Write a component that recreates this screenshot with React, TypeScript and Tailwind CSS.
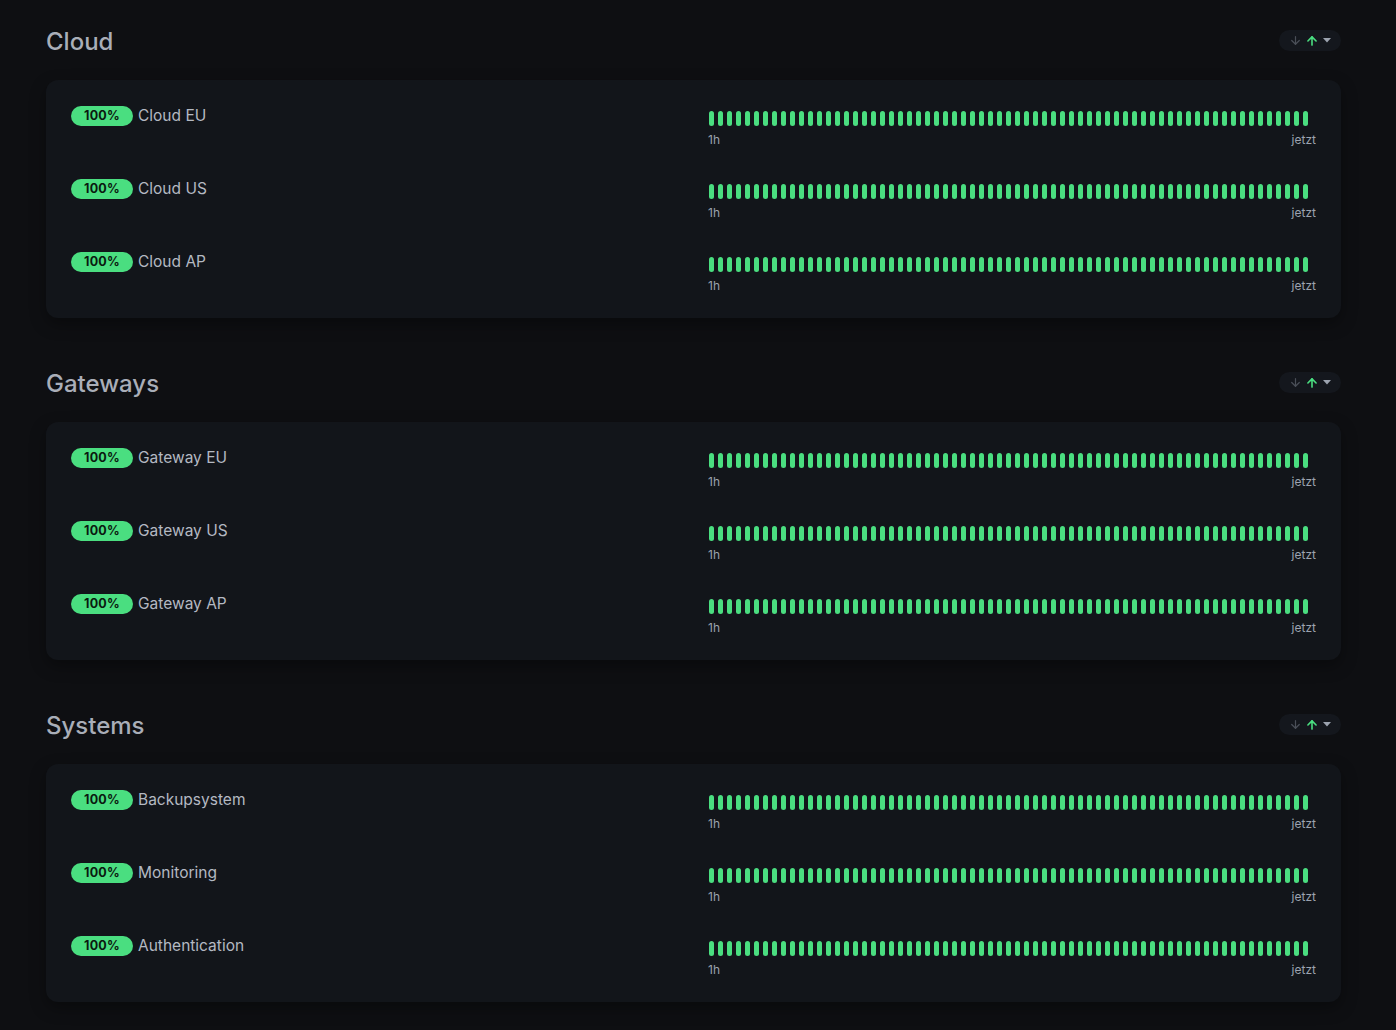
import React from 'react';
import { ArrowDown, ArrowUp } from 'lucide-react';

type Service = { name: string; uptime: string };
type Group = { title: string; services: Service[] };

const groups: Group[] = [
  {
    title: 'Cloud',
    services: [
      { name: 'Cloud EU', uptime: '100%' },
      { name: 'Cloud US', uptime: '100%' },
      { name: 'Cloud AP', uptime: '100%' },
    ],
  },
  {
    title: 'Gateways',
    services: [
      { name: 'Gateway EU', uptime: '100%' },
      { name: 'Gateway US', uptime: '100%' },
      { name: 'Gateway AP', uptime: '100%' },
    ],
  },
  {
    title: 'Systems',
    services: [
      { name: 'Backupsystem', uptime: '100%' },
      { name: 'Monitoring', uptime: '100%' },
      { name: 'Authentication', uptime: '100%' },
    ],
  },
];

const BARS = Array.from({ length: 67 }, (_, i) => i);

const SortControl: React.FC = () => (
  <div className="flex items-center h-[21px] mb-[3px] rounded-full bg-[#14171d] pl-[10px] pr-[10px]">
    <ArrowDown size={13} strokeWidth={2.25} className="text-[#4a4f58]" />
    <ArrowUp size={14} strokeWidth={2.75} className="text-[#4ade80] ml-[3px]" />
    <svg width="8" height="5" viewBox="0 0 8 5" className="ml-[4px]">
      <path d="M0 0h8L4 4.5z" fill="#9ca3af" />
    </svg>
  </div>
);

const ServiceRow: React.FC<{ service: Service }> = ({ service }) => (
  <div className="flex items-start h-[43px]">
    <div className="flex-1 flex items-center h-6 gap-[5px]">
      <span className="inline-flex items-center justify-center w-[62px] h-5 rounded-full bg-[#4ade80] text-[#0b1a10] text-[12.5px] font-bold tracking-[0.02em]">
        {service.uptime}
      </span>
      <span className="text-[15.5px] text-[#b4b9c2]">{service.name}</span>
    </div>
    <div className="w-[608px] pt-[7px]">
      <div className="flex gap-1 pl-px">
        {BARS.map((i) => (
          <div key={i} className="w-[5px] h-[15px] rounded-full bg-[#4ade80]" />
        ))}
      </div>
      <div className="flex justify-between mt-[6px] text-xs leading-4 text-[#9ca3af]">
        <span>1h</span>
        <span>jetzt</span>
      </div>
    </div>
  </div>
);

export default function App() {
  return (
    <div className="min-h-screen bg-[#0e0f12] pl-[46px] pr-[55px] pt-[26px] pb-10 font-['Inter',sans-serif]">
      <div className="flex flex-col gap-[50px]">
        {groups.map((g) => (
          <section key={g.title}>
            <div className="flex items-center justify-between h-8 mb-[22px]">
              <h2 className="text-2xl font-medium leading-8 text-[#a9aeb8]">{g.title}</h2>
              <SortControl />
            </div>
            <div className="rounded-xl bg-[#12151a] pl-[25px] pr-[25px] pt-6 pb-[25px] flex flex-col gap-[30px] shadow-[0_6px_16px_rgba(0,0,0,0.35)]">
              {g.services.map((s) => (
                <ServiceRow key={s.name} service={s} />
              ))}
            </div>
          </section>
        ))}
      </div>
    </div>
  );
}
